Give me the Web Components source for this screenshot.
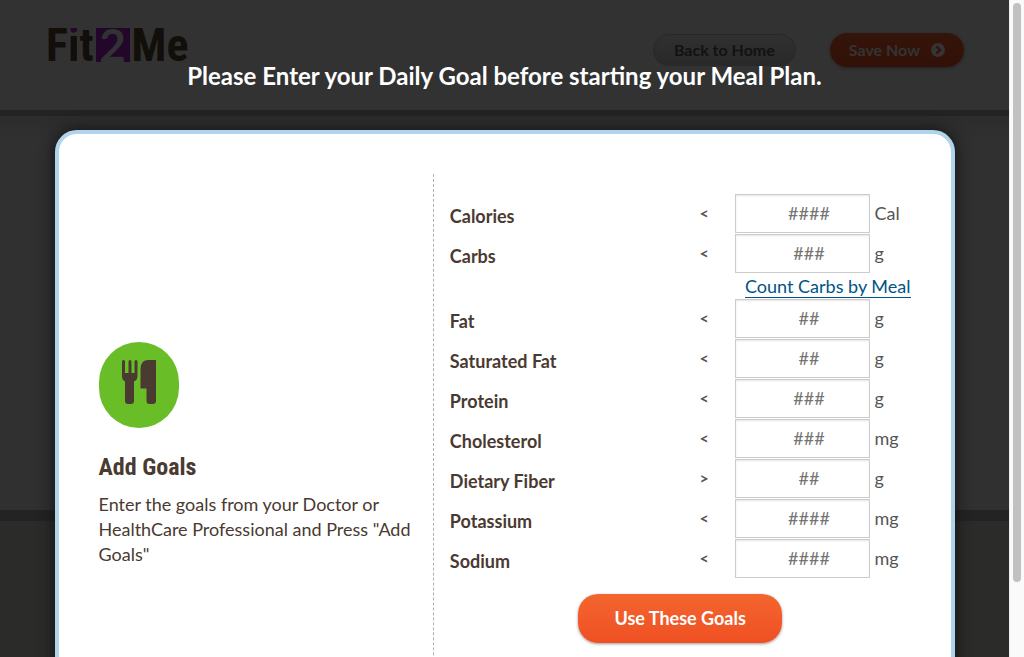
<!DOCTYPE html>
<html lang="en">
<head>
<meta charset="utf-8">
<meta name="viewport" content="width=device-width, initial-scale=1">
<title>Fit2Me - Daily Goals</title>
<style>
html, body { margin: 0; height: 100%; overflow: hidden; background: #303030; }
body { font-family: Lato, "Liberation Sans", sans-serif; font-size: 18px; line-height: 25px; color: #4a3a31; }
</style>
</head>
<body>
<app-shell>
  <site-header slot="page"></site-header>
  <goal-dialog slot="dialog" heading="Please Enter your Daily Goal before starting your Meal Plan.">
    <goal-intro slot="intro" heading="Add Goals">Enter the goals from your Doctor or HealthCare Professional and Press "Add Goals"</goal-intro>
    <goal-form slot="form">
      <goal-row label="Calories" sign="&lt;" hint="####" unit="Cal"></goal-row>
      <goal-row label="Carbs" sign="&lt;" hint="###" unit="g"></goal-row>
      <meal-link>Count Carbs by Meal</meal-link>
      <goal-row label="Fat" sign="&lt;" hint="##" unit="g"></goal-row>
      <goal-row label="Saturated Fat" sign="&lt;" hint="##" unit="g"></goal-row>
      <goal-row label="Protein" sign="&lt;" hint="###" unit="g"></goal-row>
      <goal-row label="Cholesterol" sign="&lt;" hint="###" unit="mg"></goal-row>
      <goal-row label="Dietary Fiber" sign="&gt;" hint="##" unit="g"></goal-row>
      <goal-row label="Potassium" sign="&lt;" hint="####" unit="mg"></goal-row>
      <goal-row label="Sodium" sign="&lt;" hint="####" unit="mg"></goal-row>
    </goal-form>
  </goal-dialog>
</app-shell>
<script>
const define = (name, render) => customElements.define(name, class extends HTMLElement {
  connectedCallback() {
    if (this.shadowRoot) return;
    const t = document.createElement('template');
    t.innerHTML = render(this);
    this.attachShadow({ mode: 'open' }).append(t.content.cloneNode(true));
  }
});
const attr = (el, name) => (el.getAttribute(name) || '').replace(/&/g, '&amp;').replace(/</g, '&lt;').replace(/"/g, '&quot;');

define('app-shell', () => `
<style>
:host { display: grid; grid-template-columns: minmax(0, 1fr) 15px; height: 100vh; overflow: hidden; }
.stage { display: grid; grid-template-rows: minmax(0, 1fr); min-height: 0; overflow: hidden; }
.page, .overlay { grid-area: 1 / 1; min-width: 0; }
.page { display: flex; flex-direction: column; }
.body { height: 394px; background: linear-gradient(#2c2c2c, #303030 24px); border-bottom: 11px solid #232323; }
.foot { flex: 1; background: #2b2b29; }
.track { background: #fafafa; border-left: 1px solid #eee; padding: 3px; box-sizing: border-box; }
.thumb { height: 89%; background: #c1c1c1; border-radius: 4px; }
</style>
<div class="stage">
  <div class="page"><slot name="page"></slot><div class="body"></div><div class="foot"></div></div>
  <div class="overlay"><slot name="dialog"></slot></div>
</div>
<div class="track"><div class="thumb"></div></div>`);

define('site-header', () => `
<style>
:host { display: flex; align-items: flex-start; height: 110px; box-sizing: content-box; padding: 0 45px 0 46px; background: #323232; border-bottom: 6px solid #232323; }
.logo { display: flex; margin-top: 28px; height: 34px; line-height: 34px; font-family: "Roboto Condensed", Roboto, sans-serif; font-size: 46px; font-weight: 700; color: #120e0a; text-decoration: none; }
.i { background: linear-gradient(#26082b 8px, #120e0a 8px); -webkit-background-clip: text; background-clip: text; color: transparent; }
.two { background: #22072a; color: #323232; width: 34px; margin: 0 2px; text-align: center; font-family: Lato, sans-serif; }
nav { display: flex; align-items: center; gap: 34px; margin: 33px 0 0 auto; }
button { font: 700 16px/20px Lato, "Liberation Sans", sans-serif; border: 0; white-space: nowrap; }
.home { height: 32px; padding: 0 20px; border: 1px solid #282828; border-radius: 16px; color: #121212; background: linear-gradient(#303030, #292929); }
.save { height: 34px; padding: 0 19px; border-radius: 17px; color: #353333; background: linear-gradient(#34150a, #321007); box-shadow: 0 1px 3px #222; display: flex; align-items: center; gap: 11px; }
</style>
<a class="logo" href="#" aria-label="Fit2Me"><span>F</span><span class="i">i</span><span>t</span><span class="two">2</span><span>Me</span></a>
<nav>
  <button class="home">Back to Home</button>
  <button class="save">Save Now <svg width="14" height="14" viewBox="0 0 14 14" aria-hidden="true"><circle cx="7" cy="7" r="7" fill="#353333"/><path d="M5.5 3.5 9 7l-3.5 3.5" fill="none" stroke="#321208" stroke-width="2.2"/></svg></button>
</nav>`);

define('goal-dialog', el => `
<style>
:host { display: block; padding: 61px 16px 0; }
h1 { margin: 0; font-size: 24px; line-height: 30px; font-weight: 700; color: #fff; text-align: center; }
.card { display: grid; grid-template-columns: minmax(0, 7fr) minmax(0, 10fr); box-sizing: border-box; max-width: 900px; margin: 39px auto 0; padding: 40px; background: #fff; border: 4px solid #b0d4ec; border-radius: 22px; box-shadow: 0 0 16px #111; }
.left { display: flex; align-items: center; }
.right { padding: 20px 0 92px 16px; border-left: 1px dashed #b0b0b0; }
</style>
<h1>${attr(el, 'heading')}</h1>
<section class="card">
  <div class="left"><slot name="intro"></slot></div>
  <div class="right"><slot name="form"></slot></div>
</section>`);

define('goal-intro', el => `
<style>
:host { display: block; padding-right: 16px; }
.badge { display: block; }
h2 { margin: 24px 0 10px; font: 700 24px/30px "Roboto Condensed", "Liberation Sans Narrow", "Liberation Sans", sans-serif; }
p { margin: 0; }
</style>
<svg class="badge" width="80" height="86" viewBox="0 0 80 86" aria-hidden="true">
  <rect width="80" height="86" rx="40" ry="40" fill="#69be28"/>
  <g fill="#4a3a31">
    <path d="M23 19.500a1.500 1.500 0 0 1 3 0V31h3.500V19.500a1.500 1.500 0 0 1 3 0V31h3V19.500a1.500 1.500 0 0 1 3 0V34q0 4-3.500 5.500V59q0 3-3 3H29q-3 0-3-3V39.500Q23 38 23 34Z"/>
    <path d="M57 18.500V59q0 3-3 3h-3.500q-3 0-3-3V46.500h-6V27q0-9 8-9H56q1 0 1 .5Z"/>
  </g>
</svg>
<h2>${attr(el, 'heading')}</h2>
<p><slot></slot></p>`);

define('goal-form', () => `
<style>
:host { display: block; }
form { display: flex; flex-direction: column; }
button { align-self: center; margin-top: 15px; height: 49px; padding: 0 36px; border: 0; border-radius: 20px; color: #fff; font: 700 18px/25px Lato, "Liberation Sans", sans-serif; background: linear-gradient(#f4652f, #ef5023); box-shadow: 0 1px 3px #999; }
</style>
<form><slot></slot><button type="button">Use These Goals</button></form>`);

define('goal-row', el => `
<style>
:host { display: grid; grid-template-columns: minmax(0, 1fr) 35px 135px 41px; height: 40px; color: #555; }
label { padding-top: 10px; font-weight: 700; color: #4a3a31; }
.sign { font-size: 16px; line-height: 37px; font-weight: 700; }
.unit { line-height: 39px; padding-left: 5px; }
input { box-sizing: border-box; width: 100%; height: 39px; padding: 0 0 2px 14px; border: 1px solid #ccc; border-radius: 0; background: #fff; box-shadow: inset 0 1px 2px #e6e6e6; font: 18px/25px Lato, "Liberation Sans", sans-serif; text-align: center; }
input::placeholder { color: #757575; opacity: 1; }
</style>
<label for="v">${attr(el, 'label')}</label><span class="sign">${attr(el, 'sign')}</span><input id="v" type="text" inputmode="numeric" placeholder="${attr(el, 'hint')}"><span class="unit">${attr(el, 'unit')}</span>`);

define('meal-link', () => `
<style>
:host { display: flex; justify-content: flex-end; height: 25px; }
a { box-sizing: border-box; height: 24px; color: #005487; text-decoration: none; border-bottom: 1px solid #005487; }
</style>
<a href="#"><slot></slot></a>`);
</script>
</body>
</html>
